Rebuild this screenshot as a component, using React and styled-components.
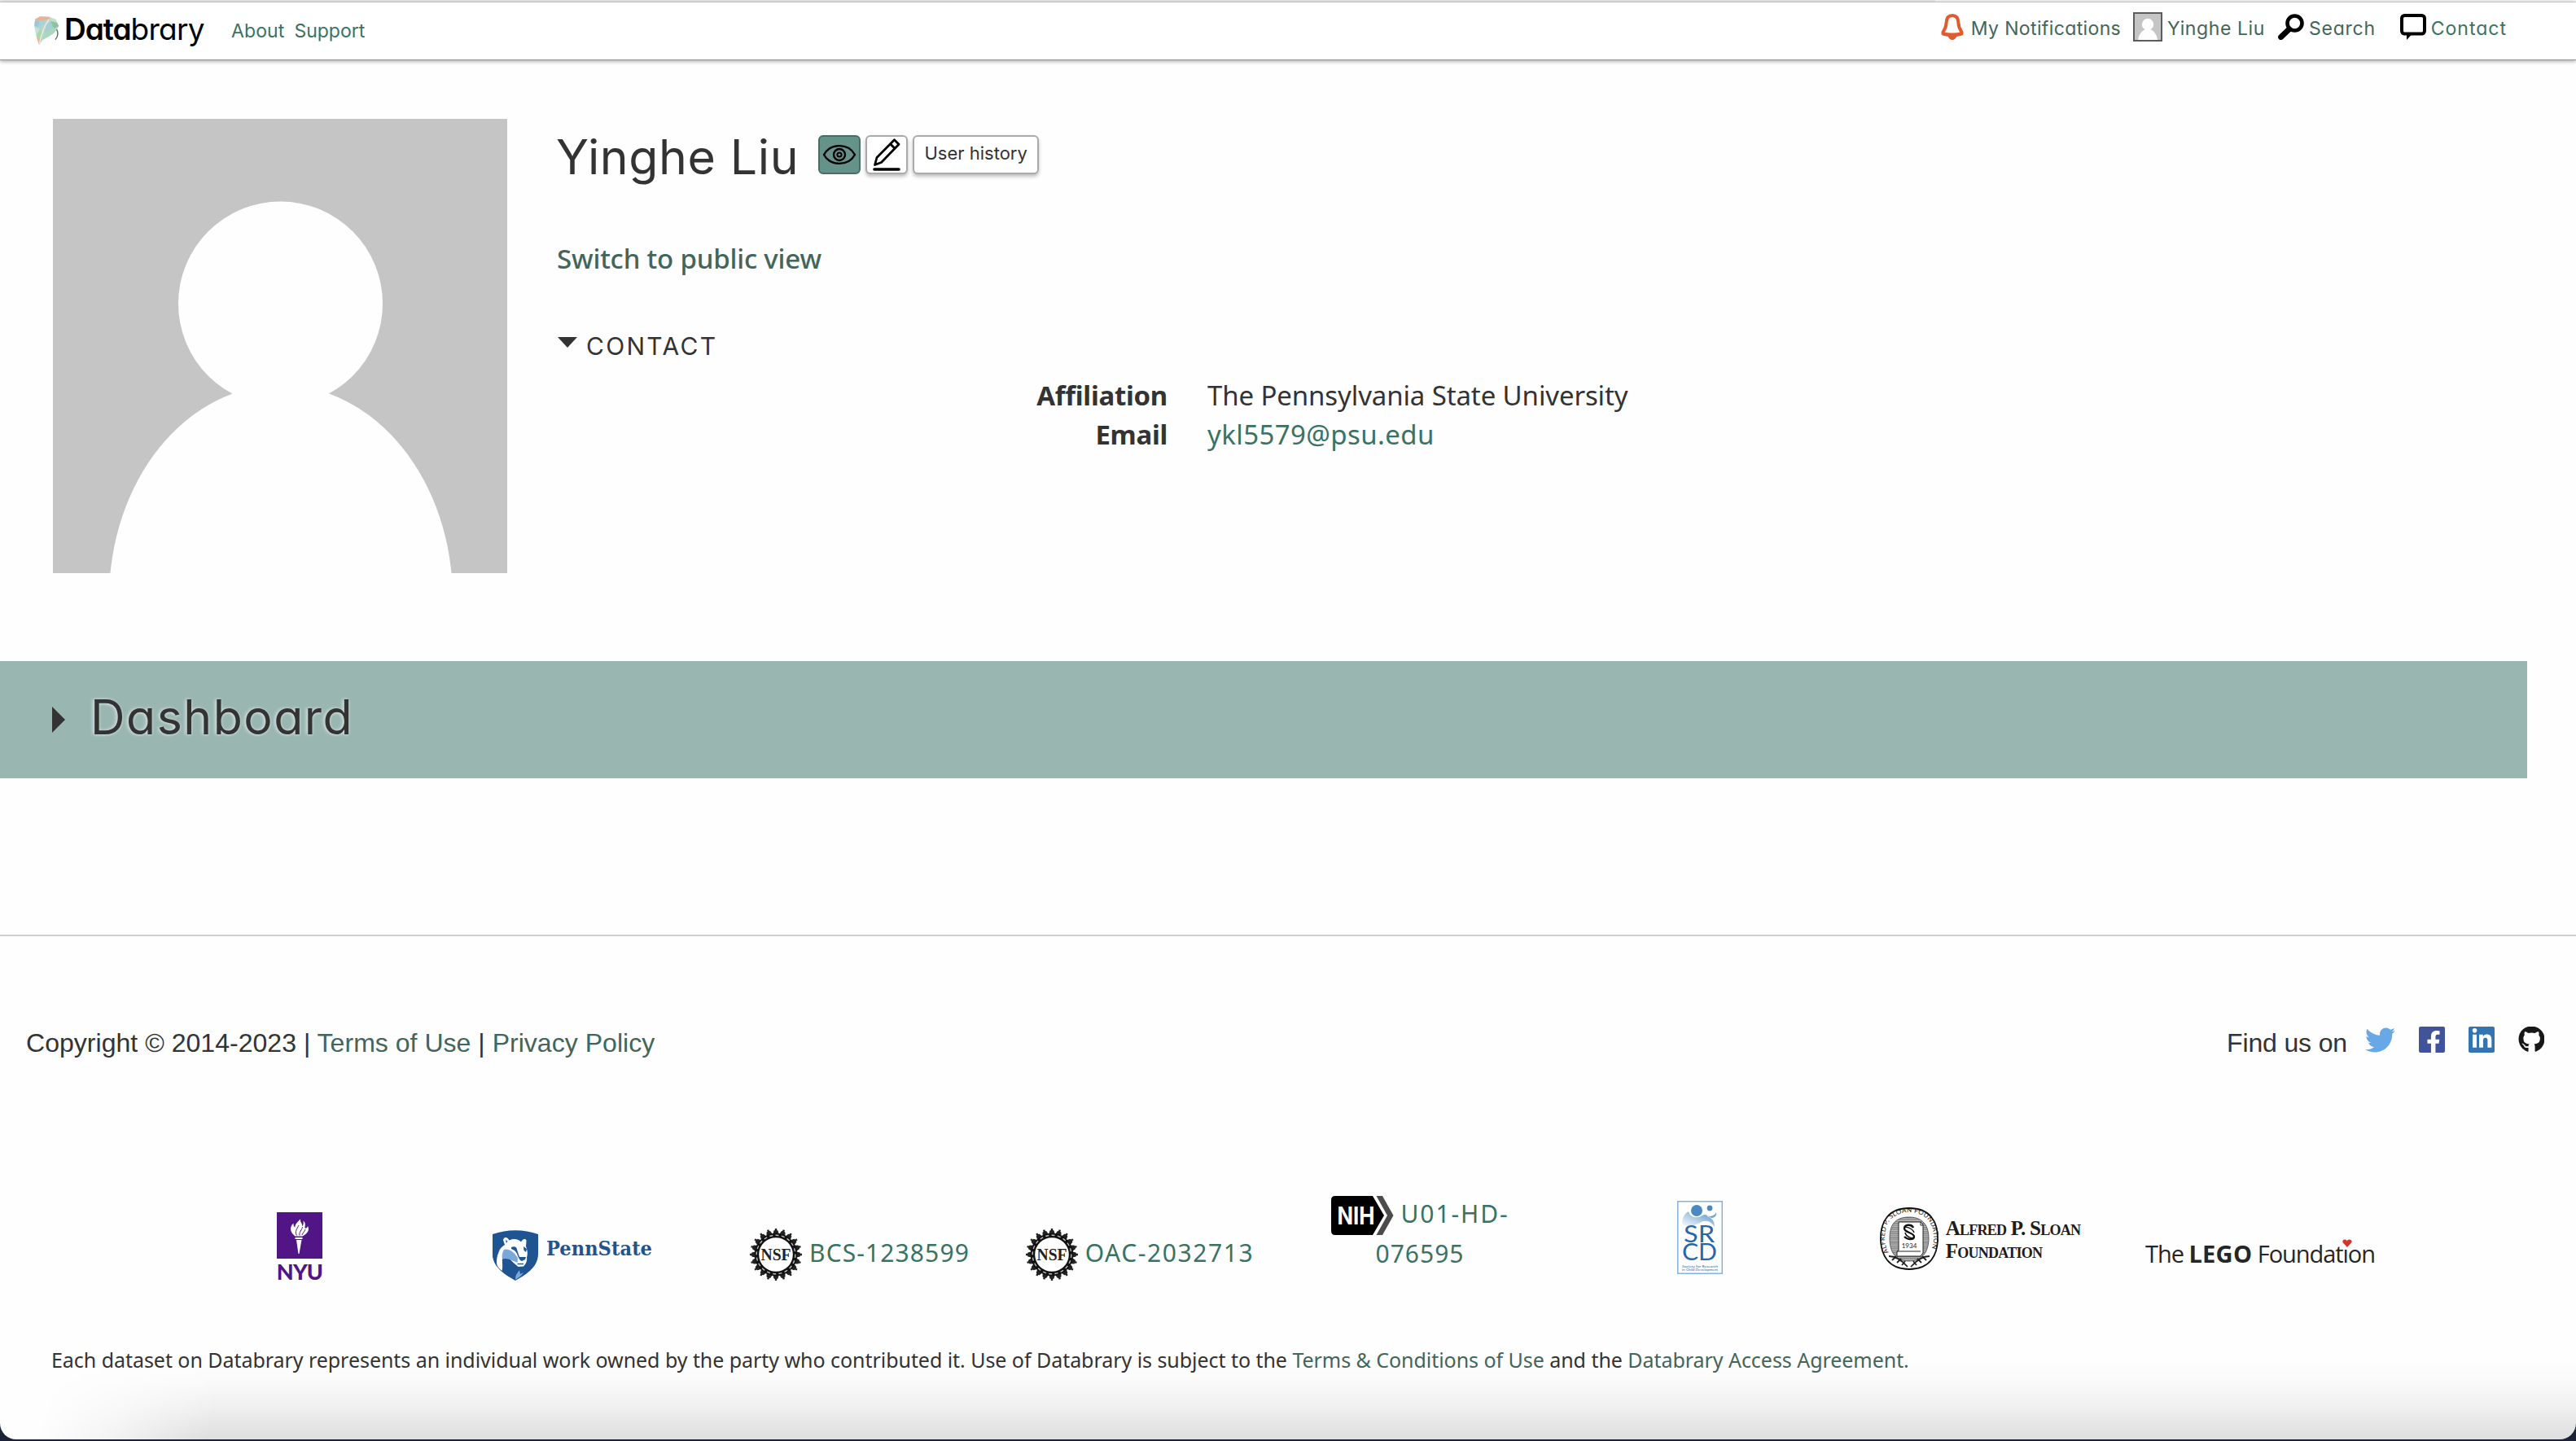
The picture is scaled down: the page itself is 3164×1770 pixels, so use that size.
import React from "react";
import styled, { createGlobalStyle } from "styled-components";
import { FaTwitter, FaFacebookF, FaLinkedinIn, FaGithub } from "react-icons/fa";

const geometric = `"Inter", "Liberation Sans", sans-serif`;
const humanist = `"Noto Sans", "Open Sans", sans-serif`;
const grotesque = `"Liberation Sans", Arial, sans-serif`;
const ink = "#333333";
const link = "#43655b";
const brightLink = "#3a7263";

const Globals = createGlobalStyle`
  *, *::before, *::after { box-sizing: border-box; }
  body { margin: 0; background: #1b2338; color: ${ink}; font-family: ${humanist}; }
  a { color: inherit; text-decoration: none; }
  svg { display: block; flex: none; }
`;

/* ---------- window ---------- */
const Window = styled.div`
  position: relative;
  width: 3164px;
  height: 1768px;
  background: #fefefe;
  border-radius: 0 0 20px 20px;
  overflow: hidden;
  display: flex;
  flex-direction: column;
`;
const WindowStrip = styled.div`
  flex: none;
  height: 3px;
  background: linear-gradient(90deg, #e8e8e8 2377px, #f5f5f5 2377px);
  border-bottom: 1px solid #d8d8d8;
`;
const DockShade = styled.div`
  position: absolute;
  left: 0;
  right: 0;
  bottom: 0;
  height: 96px;
  pointer-events: none;
  background: linear-gradient(180deg, rgba(0,0,0,0) 0%, rgba(0,0,0,.015) 25%, rgba(0,0,0,.06) 60%, rgba(0,0,0,.125) 100%);
  mask-image: linear-gradient(100deg, transparent 60px, rgba(0,0,0,.35) 150px, #000 270px);
`;

/* ---------- header ---------- */
const Header = styled.header`
  flex: none;
  height: 71px;
  background: #fff;
  display: flex;
  justify-content: space-between;
  padding: 0 85px 0 41px;
  box-shadow: 0 1px 5px rgba(0, 0, 0, 0.4);
  border-bottom: 1px solid #979797;
`;
const Brand = styled.a`
  display: flex;
  align-items: flex-start;
  padding-top: 16px;
  color: #000;
  width: 243px;
`;
const BrandName = styled.span`
  margin-left: 6px;
  margin-top: -3px;
  font: 400 37px/40px ${geometric};
  font-feature-settings: "cv11";
  letter-spacing: -0.75px;
  white-space: nowrap;
  b { font-weight: 600; letter-spacing: -1px; }
`;
const HeaderSide = styled.nav`
  display: flex;
  align-items: flex-start;
  padding-top: ${p => p.$top}px;
`;
const NavLink = styled.a`
  display: flex;
  align-items: center;
  height: 36px;
  margin-left: ${p => p.$before || 0}px;
  color: ${p => (p.$bright ? brightLink : link)};
  font: 400 23px/36px ${geometric};
  font-feature-settings: "cv11";
  letter-spacing: ${p => p.$track || 0}px;
  white-space: nowrap;
`;
const NavLabel = styled.span`
  margin-left: ${p => p.$gap}px;
  margin-top: 4px;
`;
const Thumb = styled.span`
  display: block;
  width: 36px;
  height: 36px;
  border: 2px solid #5c5c5c;
`;

/* ---------- profile ---------- */
const Profile = styled.section`
  flex: none;
  height: 738px;
  padding: 72px 60px 0 65px;
  display: flex;
  gap: 61px;
`;
const Details = styled.div`
  flex: 1;
  padding-top: 10px;
`;
const TitleRow = styled.div`
  display: flex;
  align-items: flex-start;
  height: 72px;
`;
const Name = styled.h1`
  margin: 0 24px 0 -1px;
  font: 400 59px/73px ${geometric};
  letter-spacing: 0.6px;
`;
const Tool = styled.button`
  display: flex;
  justify-content: center;
  height: 48px;
  width: ${p => p.$w}px;
  margin: 10px 6px 0 0;
  padding: ${p => (p.$text ? 0 : 2)}px 0 0;
  border: 2px solid ${p => (p.$on ? "#45705f" : "#aaaaaa")};
  border-radius: 6px;
  background: ${p => (p.$on ? "#65938a" : "#fff")};
  box-shadow: ${p => (p.$on ? "none" : "0 3px 4px rgba(0,0,0,.25)")};
  color: ${ink};
  font: 400 22px/40px ${geometric};
  font-feature-settings: "cv11";
  white-space: nowrap;
`;
const SwitchLink = styled.a`
  display: block;
  margin-top: 66px;
  color: ${link};
  font: 500 33px/48px ${humanist};
  letter-spacing: -0.18px;
`;
const SectionTitle = styled.h2`
  display: flex;
  align-items: center;
  gap: 11px;
  margin: 59px 0 0 1px;
  font: 400 30px/48px ${geometric};
  letter-spacing: 2.3px;
  svg { margin-top: -10px; }
`;
const Facts = styled.dl`
  margin: 13px 0 0;
  display: grid;
  grid-template-columns: 750px 1fr;
  column-gap: 49px;
  font-size: 33px;
  line-height: 48px;
`;
const FactName = styled.dt`
  text-align: right;
  font-weight: 700;
  letter-spacing: -0.3px;
  white-space: nowrap;
`;
const FactValue = styled.dd`
  margin: 0;
  letter-spacing: ${p => p.$track || 0}px;
  color: ${p => (p.$link ? brightLink : ink)};
`;

/* ---------- dashboard ---------- */
const Dashboard = styled.section`
  flex: none;
  width: 3104px;
  height: 144px;
  padding: 0 0 0 64px;
  background: #99b6b0;
  display: flex;
  align-items: center;
  gap: 31px;
`;
const DashboardTitle = styled.h1`
  margin: 0 0 7px;
  font: 400 59px/72px ${geometric};
  font-feature-settings: "cv11";
  letter-spacing: 1.5px;
  text-shadow: -2px 0 4px rgba(255, 255, 255, 0.6), 1px 1px 3px rgba(255, 255, 255, 0.3);
`;

/* ---------- footer ---------- */
const Footer = styled.footer`
  flex: none;
  margin-top: 192px;
  border-top: 2px solid #cfcfcf;
`;
const Legal = styled.div`
  display: flex;
  justify-content: space-between;
  align-items: flex-start;
  padding: 111px 39px 0 32px;
  font: 400 32px/40px ${grotesque};
  letter-spacing: 0.03px;
  a { color: ${link}; }
`;
const Social = styled.div`
  display: flex;
  align-items: flex-start;
`;
const SocialLabel = styled.span`
  letter-spacing: -0.15px;
  margin-right: 21px;
`;
const SocialLink = styled.a`
  display: flex;
  justify-content: ${p => p.$align || "center"};
  align-items: flex-end;
  width: ${p => p.$w || 32}px;
  height: 32px;
  margin-right: ${p => p.$after || 0}px;
  border-radius: 2px;
  background: ${p => p.$fill || "transparent"};
  overflow: hidden;
`;
const Sponsors = styled.div`
  display: grid;
  grid-template-columns: repeat(8, 344px);
  height: 180px;
  margin: 137px 0 0 196px;
`;
const Sponsor = styled.a`
  display: flex;
  align-items: flex-start;
  justify-content: center;
  padding-top: ${p => p.$top}px;
  margin-left: ${p => p.$shift || 0}px;
  color: ${brightLink};
  font: 400 30px/48px ${humanist};
`;
const Stack = styled.span`
  display: flex;
  flex-direction: column;
  align-items: center;
`;
const Grant = styled.span`
  margin: ${p => p.$drop || 0}px 0 0 9px;
  letter-spacing: ${p => p.$track}px;
  white-space: nowrap;
`;
const GrantTail = styled.span`
  margin-top: -1px;
  letter-spacing: 1px;
`;
const GrantLine = styled.span`
  display: flex;
  height: 48px;
`;
const NyuName = styled.span`
  margin-top: 1px;
  font: 900 27px/29px "Lato", sans-serif;
  letter-spacing: -0.8px;
  color: #521585;
`;
const PennName = styled.span`
  margin: 6px 0 0 10px;
  font: 700 25px/34px "DejaVu Serif Condensed", "DejaVu Serif", serif;
  font-stretch: condensed;
  letter-spacing: 0.1px;
  color: #1f5493;
`;
const SloanName = styled.span`
  margin: 13px 0 0 9px;
  font: 700 25px/26px "Liberation Serif", serif;
  letter-spacing: -0.75px;
  color: #1c1c1c;
  white-space: nowrap;
  small { font-size: 18px; }
`;
const SloanLine = styled.span`
  display: block;
`;
const LegoName = styled.span`
  position: relative;
  font: 400 29px/40px "Open Sans", sans-serif;
  letter-spacing: -1.05px;
  color: #262626;
  white-space: nowrap;
  b { letter-spacing: 0.3px; }
`;
const Heart = styled.svg`
  position: absolute;
  left: 242px;
  top: 2px;
`;
const Notice = styled.p`
  margin: 34px 0 0 63px;
  font-size: 25px;
  line-height: 36px;
  letter-spacing: -0.045px;
  white-space: nowrap;
  a { color: ${link}; }
`;

/* ---------- drawings ---------- */
const Leaf = () => (
  <svg width="32" height="37" viewBox="125 55 96 111">
    <path d="M128 90 132 68 150 59 182 60 207 70 219 94 204 118 180 134 160 144 146 163 136 132Z" fill="#b5d6d2" />
    <path d="M131 70 150 59 184 60 190 68 168 72 148 75Z" fill="#ecb195" />
    <path d="M131 72 148 76 140 105 129 92Z" fill="#9fc6d8" />
    <path d="M148 76 176 70 150 104 140 105Z" fill="#a9d2d9" />
    <path d="M184 60 207 70 212 82 188 76Z" fill="#bfe0c4" />
    <path d="M188 76 212 82 219 94 200 103Z" fill="#8fc19a" />
    <path d="M188 76 200 103 166 120 172 92Z" fill="#a5d0cf" />
    <path d="M166 120 204 104 200 120 160 144Z" fill="#a9d9bb" />
    <path d="M129 94 150 104 136 130Z" fill="#c4e2d3" />
    <path d="M150 104 158 118 152 145 136 130Z" fill="#a8d8b0" />
    <path d="M136 132 152 145 146 163Z" fill="#efb593" />
    <path d="M183 68C168 90 156 115 147 158" stroke="#f7e8cf" strokeWidth="4" fill="none" />
    <path d="M211 106C218 122 215 134 206 144" stroke="#4f6660" strokeWidth="4" fill="none" />
  </svg>
);
const Bell = () => (
  <svg width="28" height="32" viewBox="0 0 28 32">
    <path d="M14 2C8.6 2 6.8 6 6.6 11C6.4 17 4.6 19.5 2.5 22.5V24.6C9 26.6 19 26.6 25.5 24.6V22.5C23.4 19.5 21.6 17 21.4 11C21.2 6 19.4 2 14 2Z" fill="none" stroke="#de5c2f" strokeWidth="4" strokeLinejoin="round" />
    <path d="M3 22C9 24 19 24 25 22V26C19 27.5 9 27.5 3 26Z" fill="#de5c2f" />
    <path d="M8.5 27H19.5C18.5 30.5 16.5 32 14 32S9.5 30.5 8.5 27Z" fill="#de5c2f" />
  </svg>
);
const Magnifier = () => (
  <svg width="32" height="32" viewBox="0 0 32 32">
    <circle cx="20.5" cy="11.5" r="9" fill="none" stroke="#000" strokeWidth="4.6" />
    <path d="M13.5 19 3.6 28.5" stroke="#000" strokeWidth="7" strokeLinecap="round" />
  </svg>
);
const Bubble = () => (
  <svg width="32" height="32" viewBox="0 0 32 32">
    <rect x="2" y="2" width="28" height="22.5" rx="3.5" fill="none" stroke="#000" strokeWidth="4" />
    <path d="M8 24V32L14.5 25Z" fill="#000" />
  </svg>
);
const Portrait = ({ size }) => (
  <svg width={size} height={size} viewBox="0 0 558 558">
    <rect width="558" height="558" fill="#c5c5c5" />
    <circle cx="279.500" cy="227" r="125.500" fill="#fefefe" />
    <ellipse cx="280" cy="589" rx="211" ry="262" fill="#fefefe" />
  </svg>
);
const Eye = () => (
  <svg width="42" height="40" viewBox="0 0 42 40" fill="none" stroke="#000" strokeWidth="2.4">
    <path d="M2 20C10 5.500 32 5.500 40 20C32 34.500 10 34.500 2 20Z" />
    <circle cx="21" cy="20" r="7" />
    <circle cx="21" cy="20" r="2.600" strokeWidth="2" />
  </svg>
);
const Pencil = () => (
  <svg width="34" height="40" viewBox="0 0 34 40" fill="none" stroke="#000" strokeWidth="2.8" strokeLinejoin="round">
    <path d="M2.500 32.500 5 23.500 26.500 1.800 32 7.300 10.500 29.500Z" />
    <path d="M21.500 6.800 27 12.300" />
    <path d="M2 38H32" strokeWidth="3.600" strokeLinecap="round" />
  </svg>
);
const NyuTorch = () => (
  <svg width="56" height="57" viewBox="0 0 56 57">
    <rect width="56" height="57" fill="#521585" />
    <path d="M22.500 31H31.500V33H22.500ZM24 34H30.500L27.500 51H26.500Z" fill="#fff" />
    <path d="M22.500 29.500C17 25 14.500 19 20.500 13.500C20.500 17 21 18 22.500 18.500C22 15 24.500 13 29 8.500C28.500 13 31.500 13 31 17C32.500 16.500 33 13 32.500 10.500C36 13 34.500 17 34.500 19.500C36 20 37.500 19 38 17C40.500 22 38 26 31.500 29.500Z" fill="#fff" />
    <path d="M24.500 28.500C21.500 24 25 20 27 16M28 28.500C27 24 31 22 31.500 18M31 28C32 25 34 24 35 21" stroke="#521585" strokeWidth="1" fill="none" />
  </svg>
);
const PennShield = () => (
  <svg width="56" height="62" viewBox="0 0 56 62">
    <path d="M0 5C18-1.500 38-1.500 56 5V29C56 44 44 53 28 62C12 53 0 44 0 29Z" fill="#1f5493" />
    <path d="M5 40C5 30 8 22 15 18L13 12C14 8 18 8 20.500 12.500C26 10 32 11 35 14.500C37 10.500 41 10 41.500 13L41 20C43.500 26 43 30 42 34C43 38 40.500 42 38 44.500L31.500 45C27 41 23 38 20 34L12 35C11.500 40 13 44 11.500 50C8 47 5 44 5 40Z" fill="#fff" />
    <path d="M0 29C0 34 1.500 38 4 42C4 35 6 29 9 25L4 30Z" fill="#1f5493" />
    <path d="M14 24C19 22 26 26 31 34L30.500 40C24 37 16 33 12 36C11 31 12 27 14 24Z" fill="#78a9da" />
    <path d="M23 21C27 19 30 21 30 24L33 33H41L40 36L36 38C33 37 32 34 30 29C29 26 26 24 23 23Z" fill="#1f5493" />
    <path d="M38 20 42 23 41 27 38.500 25ZM16 12 18.500 13.500 17 16Z" fill="#1f5493" />
    <path d="M30.500 41.500H38" stroke="#1f5493" strokeWidth="1.400" />
    <path d="M28 60C28 55 31 52 33 49L34 54L38 52C36 56 32 58 28 61Z" fill="#78a9da" />
  </svg>
);
const GearSeal = () => {
  const teeth = Array.from({ length: 20 }, (_, i) => i * 18);
  return (
    <svg width="64" height="64" viewBox="-32 -32 64 64">
      {teeth.map(a => (
        <path key={a} transform={`rotate(${a})`} d="M-3.800-25-2.500-29.500-1.200-30V-32H1.200V-30L2.500-29.500 3.800-25Z" fill="#222" />
      ))}
      <circle r="23.500" fill="#fff" stroke="#111" strokeWidth="5.400" />
      <circle r="23.800" fill="none" stroke="#bbb" strokeWidth="1.400" strokeDasharray="4 3.400" />
      <text x="0" y="6.800" textAnchor="middle" textLength="37" lengthAdjust="spacingAndGlyphs" fontFamily="Liberation Serif, serif" fontWeight="700" fontSize="21" fill="#222">NSF</text>
    </svg>
  );
};
const NihMark = () => (
  <svg width="77" height="48" viewBox="0 0 77 48">
    <path d="M5 0H51L65 24 51 48H5Q0 48 0 43V5Q0 0 5 0Z" fill="#000" />
    <path d="M55.500 0H63L76.500 24 63 48H55.500L69 24Z" fill="#4c4c4c" />
    <text x="7.500" y="34.500" textLength="46" lengthAdjust="spacingAndGlyphs" fontFamily="Inter, sans-serif" fontWeight="700" fontSize="30" fill="#fff">NIH</text>
  </svg>
);
const SrcdMark = () => (
  <svg width="56" height="90" viewBox="0 0 56 90">
    <defs>
      <linearGradient id="wave" x1="0" x2="1" y1="1" y2="0">
        <stop offset="0" stopColor="#fff" />
        <stop offset="0.500" stopColor="#a9c9e4" />
        <stop offset="1" stopColor="#4c8dc6" />
      </linearGradient>
    </defs>
    <rect x=".75" y=".75" width="54.500" height="88.500" fill="#fff" stroke="#86b2dc" strokeWidth="1.500" />
    <path d="M6 28C6 20 10 15 14 13C15 19 22 22 29 19C34 16 37 17 37 19C42 21 46 24 46 32C42 26 36 23 30 26C22 30 12 34 6 28Z" fill="url(#wave)" />
    <path d="M35 17C41 21 46 18 48 14C49 18 46 21 42 21Z" fill="#6ea4d3" />
    <circle cx="24" cy="12" r="7" fill="#4a89c2" />
    <circle cx="40" cy="9" r="3.400" fill="#4a89c2" />
    <g fontFamily="Lato, sans-serif" fontWeight="400" fill="#2567ab">
      <text x="8" y="51" fontSize="29" textLength="38" lengthAdjust="spacingAndGlyphs">SR</text>
      <text x="6" y="73" fontSize="29" textLength="43" lengthAdjust="spacingAndGlyphs">CD</text>
      <text x="6" y="81.500" fontSize="4.400" textLength="44" lengthAdjust="spacingAndGlyphs">Society for Research</text>
      <text x="6" y="86" fontSize="4.400" textLength="44" lengthAdjust="spacingAndGlyphs">in Child Development</text>
    </g>
  </svg>
);
const SloanSeal = () => (
  <svg width="72" height="77" viewBox="0 0 72 77">
    <defs>
      <pattern id="lines" width="4" height="2.400" patternUnits="userSpaceOnUse">
        <rect width="4" height="2.400" fill="#c4c4c4" />
        <rect width="4" height="1.200" fill="#777" />
      </pattern>
      <path id="ring" d="M11 55C4 46 4 26 13 15C25 3 47 3 59 15C68 26 68 46 61 55" />
    </defs>
    <path d="M36 1C62 1 71 18 71 38S62 76 36 76 1 58 1 38 10 1 36 1Z" fill="#fff" stroke="#111" strokeWidth="1.800" />
    <path d="M36 12C54 12 60 24 60 38S54 66 36 66 12 54 12 38 18 12 36 12Z" fill="url(#lines)" stroke="#444" strokeWidth=".8" />
    <path d="M23 18H50L53 21V56L50 60H21V54L23 53Z" fill="#fff" stroke="#222" strokeWidth="1" />
    <path d="M21 54H50M50 18V22H53" stroke="#222" strokeWidth="1" fill="none" />
    <text fontFamily="Lato, sans-serif" fontSize="8" fill="#111">
      <textPath href="#ring" textLength="130">ALFRED P. SLOAN FOUNDATION</textPath>
    </text>
    <path d="M41 25C39 20 30 21 30 26C30 31 42 31 42 36C42 40 34 40 30 36" stroke="#111" strokeWidth="2.400" fill="none" />
    <path d="M42 31C40 26 31 22 30 26M31 31C32 36 41 40 42 36" stroke="#111" strokeWidth="1.400" fill="none" />
    <text x="36" y="50" textAnchor="middle" fontFamily="Lato, sans-serif" fontSize="8" fill="#222">1934</text>
    <path d="M11 60C19 60 27 65 34 73M61 60C53 60 45 65 38 73M15 65 20 60M21 68 26 63M27 71 31 66M57 65 52 60M51 68 46 63M45 71 41 66" stroke="#222" strokeWidth="1.800" fill="none" />
  </svg>
);

export default function App() {
  return (
    <>
      <Globals />
      <Window>
        <WindowStrip />
        <Header>
          <HeaderSide $top={0}>
            <Brand href="#">
              <Leaf />
              <BrandName><b>Data</b>brary</BrandName>
            </Brand>
            <HeaderSide as="div" $top={15}>
              <NavLink $bright $track={0.1} href="#"><NavLabel $gap={0}>About</NavLabel></NavLink>
              <NavLink $bright $before={12} href="#"><NavLabel $gap={0}>Support</NavLabel></NavLink>
            </HeaderSide>
          </HeaderSide>
          <HeaderSide $top={12}>
            <NavLink $track={0.37} href="#"><Bell /><NavLabel $gap={9}>My Notifications</NavLabel></NavLink>
            <NavLink $before={15} $track={0.6} href="#">
              <Thumb><Portrait size={32} /></Thumb>
              <NavLabel $gap={6}>Yinghe Liu</NavLabel>
            </NavLink>
            <NavLink $before={16} $track={0.75} href="#"><Magnifier /><NavLabel $gap={6}>Search</NavLabel></NavLink>
            <NavLink $bright $before={30} $track={1} href="#"><Bubble /><NavLabel $gap={6}>Contact</NavLabel></NavLink>
          </HeaderSide>
        </Header>

        <Profile>
          <Portrait size={558} />
          <Details>
            <TitleRow>
              <Name>Yinghe Liu</Name>
              <Tool $w={52} $on aria-label="View"><Eye /></Tool>
              <Tool $w={52} aria-label="Edit"><Pencil /></Tool>
              <Tool $w={155} $text>User history</Tool>
            </TitleRow>
            <SwitchLink href="#">Switch to public view</SwitchLink>
            <SectionTitle>
              <svg width="24" height="13" viewBox="0 0 24 13"><path d="M0 0H24L12 13Z" fill={ink} /></svg>
              CONTACT
            </SectionTitle>
            <Facts>
              <FactName>Affiliation</FactName>
              <FactValue $track={-0.12}>The Pennsylvania State University</FactValue>
              <FactName>Email</FactName>
              <FactValue $link $track={0.4}>ykl5579@psu.edu</FactValue>
            </Facts>
          </Details>
        </Profile>

        <Dashboard>
          <svg width="16" height="32" viewBox="0 0 16 32"><path d="M0 0 16 16 0 32Z" fill={ink} /></svg>
          <DashboardTitle>Dashboard</DashboardTitle>
        </Dashboard>

        <Footer>
          <Legal>
            <span>Copyright © 2014-2023 | <a href="#">Terms of Use</a> | <a href="#">Privacy Policy</a></span>
            <Social>
              <SocialLabel>Find us on</SocialLabel>
              <SocialLink href="#" $w={38} $after={29}><FaTwitter color="#69a8e6" size={37} style={{ marginBottom: -3 }} /></SocialLink>
              <SocialLink href="#" $after={29} $fill="#415498" $align="flex-end"><FaFacebookF color="#fff" size={28} style={{ marginBottom: -1 }} /></SocialLink>
              <SocialLink href="#" $after={29} $fill="#3275b2"><FaLinkedinIn color="#fff" size={27} style={{ marginBottom: 3 }} /></SocialLink>
              <SocialLink href="#"><FaGithub color="#171717" size={33} /></SocialLink>
            </Social>
          </Legal>

          <Sponsors>
            <Sponsor href="#" $top={51}>
              <Stack><NyuTorch /><NyuName>NYU</NyuName></Stack>
            </Sponsor>
            <Sponsor href="#" $top={73} $shift={-18}>
              <PennShield /><PennName>PennState</PennName>
            </Sponsor>
            <Sponsor href="#" $top={71}>
              <GearSeal /><Grant $drop={6} $track={1.1}>BCS-1238599</Grant>
            </Sponsor>
            <Sponsor href="#" $top={71}>
              <GearSeal /><Grant $drop={6} $track={1.6}>OAC-2032713</Grant>
            </Sponsor>
            <Sponsor href="#" $top={31}>
              <Stack>
                <GrantLine><NihMark /><Grant $drop={-2} $track={1.9}>U01-HD-</Grant></GrantLine>
                <GrantTail>076595</GrantTail>
              </Stack>
            </Sponsor>
            <Sponsor href="#" $top={37}><SrcdMark /></Sponsor>
            <Sponsor href="#" $top={45}>
              <SloanSeal />
              <SloanName>
                <SloanLine>A<small>LFRED</small> P. S<small>LOAN</small></SloanLine>
                <SloanLine>F<small>OUNDATION</small></SloanLine>
              </SloanName>
            </Sponsor>
            <Sponsor href="#" $top={82}>
              <LegoName>
                The <b>LEGO</b> Foundatıon
                <Heart width="12" height="10" viewBox="0 0 12 10"><path d="M6 10 .8 4.500C-.8 2 2.500-1.500 5.500 2C8-1 12.500.500 11.500 4Z" fill="#d8352a" /></Heart>
              </LegoName>
            </Sponsor>
          </Sponsors>

          <Notice>
            Each dataset on Databrary represents an individual work owned by the party who contributed it. Use of Databrary is subject to the{" "}
            <a href="#">Terms &amp; Conditions of Use</a> and the <a href="#">Databrary Access Agreement.</a>
          </Notice>
        </Footer>
        <DockShade />
      </Window>
    </>
  );
}
